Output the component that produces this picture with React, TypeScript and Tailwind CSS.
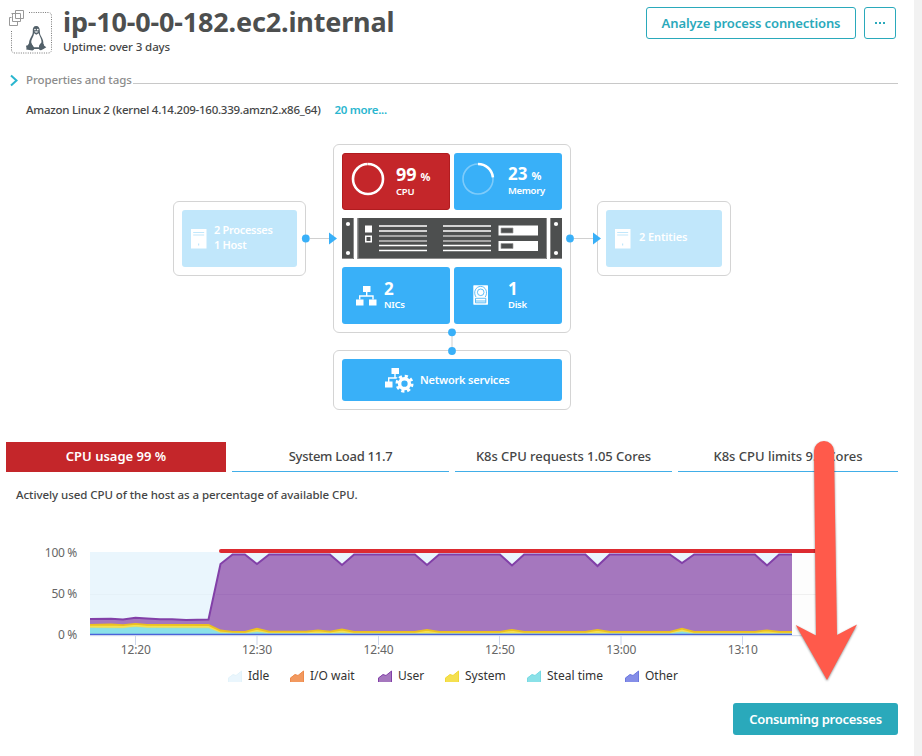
import React from 'react';

const CHART_START = 90;
const MINUTE = 12.14;
const DIPS = [[257, 564], [342, 565], [427, 565], [512, 565.5], [597.5, 566], [682, 563], [767, 565.5]];

const userLine = (() => {
  const pts: number[][] = [
    [90, 619], [111, 618.7], [123, 619.5], [135.5, 617.7], [147, 618.5], [160, 619.2], [172, 619.3],
    [186, 619.9], [208.5, 619.4], [220.5, 564], [232.6, 554.5],
  ];
  DIPS.forEach(([x, y]) => pts.push([x - MINUTE, 554.5], [x, y], [x + MINUTE, 554.5]));
  pts.push([792, 554.5]);
  return pts;
})();

const systemLine = (() => {
  const pts: number[][] = [
    [90, 624.8], [111, 624.5], [123, 625.2], [135.5, 623.8], [147, 624.8], [208.5, 625], [220.5, 630.5],
    [232.6, 631.8], [245, 631.8], [257, 628.8], [269, 631.7], [306, 631.7], [318, 630.3], [330, 631.7],
    [342, 629.5], [354, 631.9],
  ];
  [[427, 629.8], [512, 629.8], [597.5, 629.8], [682, 628.6], [767, 630.3]].forEach(([x, y]) =>
    pts.push([x - MINUTE, 631.9], [x, y], [x + MINUTE, 631.9]),
  );
  pts.push([792, 631.9]);
  return pts;
})();

const stealLine = [
  [90, 628], [123, 628.3], [135.5, 627], [147, 628], [208.5, 628.2], [220.5, 633], [245, 633.6], [257, 632],
  [269, 633.6], [330, 633.6], [342, 633], [354, 633.8], [670, 633.8], [682, 631.8], [694, 633.8], [792, 633.8],
];

const line = (p: number[][]) => 'M' + p.map(([x, y]) => `${x - CHART_START} ${y - 540}`).join('L');
const area = (p: number[][]) => `${line(p)}V95H0Z`;

function Ring({ value, faint }: { value: number; faint: string }) {
  const c = 2 * Math.PI * 15;
  return (
    <svg width="34" height="34" viewBox="0 0 34 34" fill="none">
      <circle cx="17" cy="17" r="15" stroke="white" strokeOpacity={faint} strokeWidth="1.6" />
      <circle cx="17" cy="17" r="15" stroke="white" strokeWidth="2.6" strokeDasharray={`${c * value} ${c}`} transform="rotate(-90 17 17)" />
    </svg>
  );
}

function Penguin() {
  return (
    <g>
      <path d="M36.200 26C33.600 26 32.600 28 32.800 31C33 34 31.800 35.500 30.500 38C29.300 40.300 28.800 42.500 29.300 44.500L34 49H39L43.200 44.500C43.800 42 43 39.500 41.500 37C40.200 35 39.800 33.500 39.800 31C39.800 28 38.800 26 36.200 26Z" fill="#526069" />
      <path d="M34 33.200C34 35.500 32.300 37.500 31.400 40.500C30.900 42.500 31.500 44 33.500 47.500H39C39.200 44 41.300 43.500 41.500 42C41.800 39 39.300 35.500 38.700 33.200L36.300 34.700Z" fill="white" />
      <path d="M34.200 31.700L36.200 30.700L38.600 31.700L36.300 33.200Z" fill="#c3c9cc" />
      <circle cx="35" cy="29.600" r=".8" fill="white" /><circle cx="37.700" cy="29.600" r=".9" fill="white" />
      <path d="M29.300 42.800L27.800 45.200L26 45.800L26.500 48.200L26.200 49.500L32.500 50.500Q34.700 50 34.300 47.800L31 43Q30 42.200 29.300 42.800ZM40.500 43.500Q39.300 45.500 38.800 48Q38.900 50.500 41 50.300L43.500 49L46.300 47.200L44 45.500L43.700 43.500Q42 45.500 40.500 43.500ZM34.200 47.500H39V48.800H34.200Z" fill="#526069" />
    </g>
  );
}

function HostIcon() {
  return (
    <svg width="16" height="20" viewBox="0 0 16 20" className="shrink-0">
      <rect width="15.5" height="19.5" fill="white" />
      <path d="M2.2 3.5H13.2M2.2 6H13.2" stroke="#c1e7fb" />
      <rect x="7" y="14.5" width="1.2" height="2" fill="#c1e7fb" />
    </svg>
  );
}

function NicIcon() {
  return (
    <svg width="21" height="20" viewBox="0 0 21 20" fill="white">
      <path d="M7 0H14.5V6H7ZM0 13.5H7.5V19.5H0ZM13 13.5H20.5V19.5H13Z" />
      <path d="M10.7 6V10M3.7 13.5V10H17V13.5" fill="none" stroke="white" strokeWidth="1.4" />
    </svg>
  );
}

function DiskIcon() {
  return (
    <svg width="16" height="21" viewBox="0 0 16 21" fill="none" stroke="#39b0f8" strokeWidth=".8">
      <rect x=".3" y=".3" width="14.7" height="19.4" rx=".6" fill="white" stroke="none" />
      <path d="M3 12C-.2 7 3 1.4 7.7 1.4S15.3 7 12.3 12M2.5 13.3H12.8V17.8H2.5Z" />
      <path d="M2.5 16H12.8" />
      <circle cx="7.7" cy="7.3" r="3.300" />
    </svg>
  );
}

function ServicesIcon() {
  return (
    <svg width="29" height="25" viewBox="0 0 29 25">
      <path d="M6.5 0H14V6H6.5ZM0 13.5H7.5V19.5H0Z" fill="white" />
      <path d="M10 6V10H3.7V14M10 10H13" fill="none" stroke="white" strokeWidth="1.4" />
      <circle cx="19.5" cy="15.7" r="9.6" fill="#39b0f8" />
      <circle cx="19.5" cy="15.7" r="7.4" fill="none" stroke="white" strokeWidth="3.2" strokeDasharray="3.1 2.71" />
      <circle cx="19.5" cy="15.7" r="4.9" fill="none" stroke="white" strokeWidth="3.5" />
    </svg>
  );
}

function Server() {
  return (
    <svg width="220" height="41" viewBox="0 0 220 41" className="shrink-0">
      <g fill="#4d4f4f">
        <path d="M0 0H12V41H0ZM15.5 0H205V41H15.5ZM208 0H220V41H208Z" />
      </g>
      <g fill="none" stroke="#8b8b8b" strokeWidth="1">
        <path d="M11.5 0V40.5H0M16 0V40.5H204.5V0M208.5 0V40.5H220" />
      </g>
      <g fill="white">
        <circle cx="6" cy="6" r="2.1" /><circle cx="6" cy="35" r="2.1" />
        <circle cx="214" cy="6" r="2.1" /><circle cx="214" cy="35" r="2.1" />
        <path d="M23 7.5H30V14.5H23ZM23 17.5H30V24.5H23ZM156.500 7.500H196V17.500H156.500ZM156.500 23H196V33H156.500Z" />
      </g>
      <path d="M24.500 19H28.500V23H24.500Z" fill="#4d4f4f" />
      <path d="M159 10H171V15H159ZM159 25.500H171V30.500H159Z" fill="#4d4f4f" stroke="#999" strokeWidth=".7" />
      <path d="M37 8H85M37 13H85M37 27.500H85M37 32.500H85M101 8H149M101 13H149M101 27.500H149M101 32.500H149" stroke="white" strokeWidth="1.3" />
      <path d="M37 18H85M37 23H85M101 18H149M101 23H149" stroke="#c4c4c4" strokeWidth="1.5" />
    </svg>
  );
}

function Tab({ className, children }: { className: string; children: React.ReactNode }) {
  return <div className={`flex h-[30px] items-center justify-center text-[13px] font-medium ${className}`}>{children}</div>;
}

function LegendItem({ color, edge, label, className }: { color: string; edge: string; label: string; className: string }) {
  return (
    <div className={`flex shrink-0 items-center gap-[6px] whitespace-nowrap ${className}`}>
      <svg width="14" height="12" viewBox="0 0 14 12" className="shrink-0">
        <path d="M0 12V8L5 4.500L8 5.500L14 .7V12Z" fill={color} />
        <path d="M.5 12V8L5 4.500L8 5.500L13.500 1V12" fill="none" stroke={edge} />
      </svg>
      <span>{label}</span>
    </div>
  );
}

function TimeAxis() {
  return (
    <div className="flex pl-[75px] text-[12px] leading-4 tracking-[-0.15px] text-[#666]">
      {['12:20', '12:30', '12:40', '12:50', '13:00', '13:10'].map((t) => (
        <span key={t} className="w-[121.4px] text-center">{t}</span>
      ))}
    </div>
  );
}

export default function App() {
  return (
    <div className="relative flex h-[756px] w-[922px] overflow-hidden bg-[#f2f2f2] font-['Noto_Sans','Open_Sans',sans-serif] text-[#454646]">
      <main className="h-full w-[914px] bg-white">
        <header className="flex h-[60px] pl-[9px] pr-[18px]">
          <svg width="44" height="60" viewBox="9 0 44 60" fill="none" className="shrink-0">
            <path d="M29 12.500H48Q51.500 12.500 51.500 16V49.500Q51.500 53 48 53H15Q11.500 53 11.500 49.500V30" stroke="#777" strokeDasharray="1 1.300" />
            <path d="M15.500 10.500H23.500V18.500H15.500ZM13.500 13.500H11.500M12.500 15.500V13.500H20.500V21.500H12.500ZM11.500 17.500H9.500V25.500H17.500V22" stroke="#999" />
            <Penguin />
          </svg>
          <div className="w-[593px] pl-[10px] pt-[5px]">
            <h1 className="h-[35px] whitespace-nowrap text-[27px] font-bold leading-[34px] tracking-[-0.17px] text-[#4d4f4f]">ip-10-0-0-182.ec2.internal</h1>
            <p className="whitespace-nowrap text-[11.500px] font-medium leading-[14px] tracking-[-0.1px]">Uptime: over 3 days</p>
          </div>
          <div className="flex gap-2 pt-[7px] text-[#2aa9bb]">
            <button className="h-8 w-[210px] whitespace-nowrap rounded-[3px] border border-[#2aa9bb] pt-px text-[13px] font-semibold tracking-[-0.1px]">Analyze process connections</button>
            <button className="flex h-8 w-8 items-center justify-center gap-[2px] rounded-[3px] border border-[#2aa9bb]">
              <i className="h-[2px] w-[2px] bg-current" /><i className="h-[2px] w-[2px] bg-current" /><i className="h-[2px] w-[2px] bg-current" />
            </button>
          </div>
        </header>

        <section className="h-[84px] pl-[9px] pr-4 pt-[12px]">
          <div className="flex h-4 items-center">
            <svg width="10" height="14" viewBox="0 0 10 14" fill="none" className="mr-[7px]"><path d="M2 2.500L7.500 7.500L2 12.500" stroke="#2ab6cf" strokeWidth="2" /></svg>
            <span className="w-[107px] whitespace-nowrap text-[11.500px] font-medium tracking-[-0.1px] text-[#8c8c8c]">Properties and tags</span>
            <span className="mt-[7px] h-px flex-1 bg-[#c8c8c8]" />
          </div>
          <div className="mt-[14px] flex whitespace-nowrap pl-[17px] text-[11.500px] font-medium leading-4">
            <span className="w-[308.500px] tracking-[-0.25px]">Amazon Linux 2 (kernel 4.14.209-160.339.amzn2.x86_64)</span>
            <span className="font-semibold tracking-[-0.3px] text-[#2ab6cf]">20 more...</span>
          </div>
        </section>

        <section className="relative h-[298px] w-[914px] text-white">
          <div className="absolute left-[173px] top-[57px] h-[75px] w-[133px] rounded-[6px] border border-[#d4d4d4] p-2">
            <div className="flex h-full items-center gap-[7px] rounded-[3px] bg-[#c1e7fb] pl-[9px] text-[11px] font-semibold leading-[15px] tracking-[-0.3px]">
              <HostIcon /><span className="mt-[-3px] whitespace-nowrap">2 Processes<br />1 Host</span>
            </div>
          </div>

          <div className="absolute left-[333px] top-0 flex h-[189px] w-[238px] flex-col gap-2 rounded-[6px] border border-[#d4d4d4] p-2">
            <div className="flex h-[57px] shrink-0 gap-1">
              <div className="flex w-[108px] rounded-[3px] border border-[#b01c1f] bg-[#c4262a] pl-[8px] pt-[8px]">
                <Ring value={0.99} faint="0.2" />
                <div className="pl-[11px] pt-[2px]">
                  <div className="flex items-baseline gap-1 text-[18px] font-bold leading-[20px]">99 <span className="text-[11px]">%</span></div>
                  <div className="mt-[-1px] text-[9.500px] font-semibold leading-[12px] tracking-[-0.2px]">CPU</div>
                </div>
              </div>
              <div className="flex w-[108px] rounded-[3px] bg-[#39b0f8] pl-[7px] pt-[9px]">
                <Ring value={0.23} faint="0.35" />
                <div className="pl-[13px] pt-[2px]">
                  <div className="flex items-baseline gap-1 text-[17px] font-bold leading-[20px]">23 <span className="text-[11px]">%</span></div>
                  <div className="mt-[-1px] text-[9.500px] font-semibold leading-[12px] tracking-[-0.3px]">Memory</div>
                </div>
              </div>
            </div>
            <Server />
            <div className="flex h-[57px] shrink-0 gap-1">
              <div className="flex w-[108px] items-center rounded-[3px] bg-[#39b0f8] pl-[14px]">
                <NicIcon />
                <div className="mt-[-2px] pl-[7px]">
                  <div className="text-[17px] font-bold leading-[20px]">2</div>
                  <div className="text-[9.500px] font-semibold leading-[12px] tracking-[-0.3px]">NICs</div>
                </div>
              </div>
              <div className="flex w-[108px] items-center rounded-[3px] bg-[#39b0f8] pl-[19px]">
                <DiskIcon />
                <div className="mt-[-2px] pl-[19px]">
                  <div className="text-[17px] font-bold leading-[20px]">1</div>
                  <div className="text-[9.500px] font-semibold leading-[12px] tracking-[-0.3px]">Disk</div>
                </div>
              </div>
            </div>
          </div>

          <div className="absolute left-[597px] top-[57px] h-[75px] w-[134px] rounded-[6px] border border-[#d4d4d4] p-2">
            <div className="flex h-full items-center gap-[8px] rounded-[3px] bg-[#c1e7fb] pl-[9px] text-[11px] font-semibold tracking-[-0.1px]">
              <HostIcon /><span className="mt-[-2px] whitespace-nowrap">2 Entities</span>
            </div>
          </div>

          <div className="absolute left-[333px] top-[206px] h-[60px] w-[238px] rounded-[6px] border border-[#d4d4d4] p-2">
            <div className="flex h-full items-center gap-[6px] rounded-[3px] bg-[#39b0f8] pl-[43px] text-[11px] font-semibold tracking-[-0.2px]">
              <ServicesIcon /><span className="mt-px whitespace-nowrap">Network services</span>
            </div>
          </div>

          <svg width="914" height="298" viewBox="0 144 914 298" className="absolute left-0 top-0">
            <path d="M310 238.500H330M574 238.500H594M452 336V348" stroke="#d0d0d0" />
            <g fill="#39b0f8">
              <circle cx="305.800" cy="238.500" r="3.900" /><circle cx="570" cy="238.500" r="3.900" />
              <circle cx="452" cy="332.300" r="3.900" /><circle cx="452" cy="351" r="3.900" />
              <path d="M329 232.500L337 238.500L329 244.500ZM593 232.500L601 238.500L593 244.500Z" />
            </g>
          </svg>
        </section>

        <nav className="flex gap-[6px] whitespace-nowrap pl-[6px]">
          <Tab className="w-[220px] bg-[#c4262a] font-semibold text-white">CPU usage 99 %</Tab>
          <Tab className="w-[217px] border-b border-[#41aee8] tracking-[-0.28px]">System Load 11.7</Tab>
          <Tab className="w-[217px] border-b border-[#41aee8] tracking-[-0.04px]">K8s CPU requests 1.05 Cores</Tab>
          <Tab className="w-[220px] border-b border-[#41aee8]">K8s CPU limits 9.5 Cores</Tab>
        </nav>
        <p className="mt-[15px] h-[53px] whitespace-nowrap pl-4 text-[11.500px] font-medium leading-4 tracking-[-0.06px]">Actively used CPU of the host as a percentage of available CPU.</p>

        <section className="flex h-[102px] text-[12px] text-[#666]">
          <div className="flex w-[77px] flex-col gap-[25px] pt-[5px] text-right leading-4 tracking-[-0.3px]">
            <span>100 %</span><span>50 %</span><span>0 %</span>
          </div>
          <svg width="760" height="106" viewBox="0 0 760 106" className="ml-[13px]" fill="none">
            <rect y="12" width="740" height="83" fill="#fdfdfd" />
            <path d="M0 12.500H740M0 54.500H740" stroke="#f0f0f0" />
            <rect y="12" width="702" height="83" fill="#eaf6fd" />
            <path d="M0 54.500H702" stroke="#e5f1f8" />
            <path d={area(userLine)} fill="#a577be" />
            <path d="M126 54.500H702" stroke="#9f70ba" />
            <path d={line(userLine)} stroke="#8240a8" strokeWidth="2" />
            <path d={area(systemLine)} fill="#f5e050" />
            <path d={line(systemLine)} stroke="#ecc11f" strokeWidth="1.800" />
            <path d={area(stealLine)} fill="#8ae1e8" />
            <path d={line(stealLine)} stroke="#8adfe0" strokeWidth=".6" />
            <path d="M0 94.500H702" stroke="#4b62d9" strokeWidth="1.300" />
            <path d="M0 95.700H740M45.500 96V105M167 96V105M288.500 96V105M409.500 96V105M531 96V105M652.500 96V105" stroke="#ccd6eb" />
            <path d="M131 11H735" stroke="#dc2a30" strokeWidth="4" strokeLinecap="round" />
          </svg>
        </section>
        <TimeAxis />

        <div className="mt-[9px] flex h-[18px] pl-[228px] text-[12px] text-[#333]">
          <LegendItem color="#eaf6fd" edge="#e3f3fa" label="Idle" className="w-[62px]" />
          <LegendItem color="#f2995f" edge="#ed8a4b" label="I/O wait" className="w-[88px]" />
          <LegendItem color="#a577be" edge="#8240a8" label="User" className="w-[67px]" />
          <LegendItem color="#f5e050" edge="#f1d936" label="System" className="w-[82px]" />
          <LegendItem color="#8ae1e8" edge="#78dae3" label="Steal time" className="w-[98px]" />
          <LegendItem color="#858ee8" edge="#6c79df" label="Other" className="w-[60px]" />
        </div>

        <div className="flex justify-end pr-4 pt-[18px]">
          <button className="h-8 w-[165px] whitespace-nowrap rounded-[3px] bg-[#2aa9bb] pt-px text-[13px] font-semibold tracking-[-0.27px] text-white">Consuming processes</button>
        </div>
      </main>

      <svg width="80" height="256" viewBox="787 434 80 256" className="absolute left-[787px] top-[434px] drop-shadow-[0_1px_1px_rgba(0,0,0,0.45)]">
        <path d="M814 451A10 10 0 0 1 834 451L837 635L857 624.500L827 680L795.700 625L816 635.500Z" fill="#ff5a4b" />
      </svg>
    </div>
  );
}
